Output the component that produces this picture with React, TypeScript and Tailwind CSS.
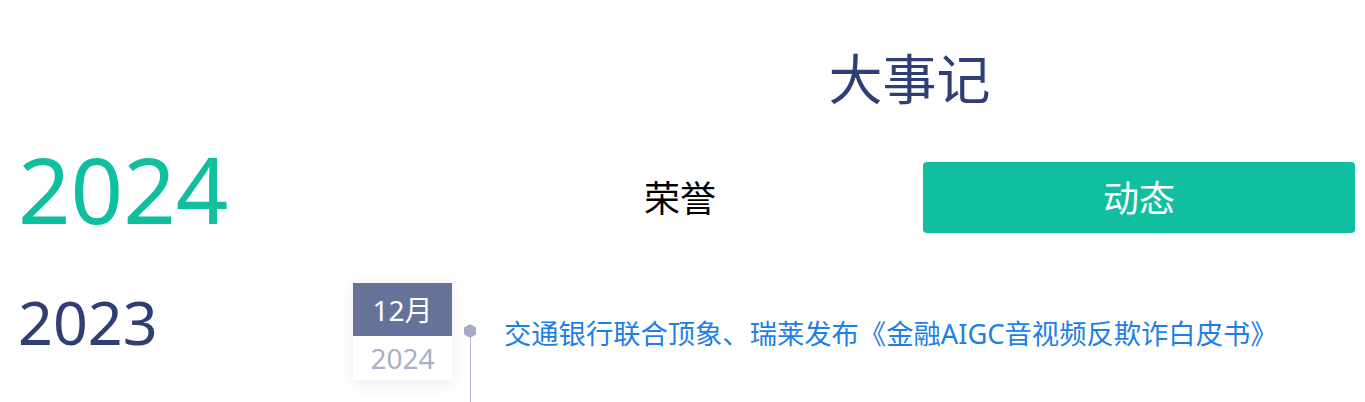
import React from "react";

const years = [
  { label: "2024", active: true },
  { label: "2023", active: false },
];

export default function App() {
  const font = { fontFamily: '"Noto Sans", "Noto Sans CJK SC", sans-serif' };

  return (
    <div className="w-[1365px] h-[402px] overflow-hidden bg-white flex" style={font}>
      {/* Year list */}
      <div className="w-[353px] shrink-0 pl-[18px] pt-[126px] flex flex-col">
        {years.map((y) =>
          y.active ? (
            <div key={y.label} className="text-[92px] leading-[126px] text-[#10bfa0]">
              {y.label}
            </div>
          ) : (
            <div key={y.label} className="text-[61px] leading-[90px] mt-[25px] text-[#313e74]">
              {y.label}
            </div>
          )
        )}
      </div>

      {/* Main */}
      <div className="flex-1 flex flex-col">
        <div className="ml-[111px] mr-[10px]">
          <h1 className="pt-[37px] text-center text-[54px] leading-[84px] text-[#303f73]">大事记</h1>
          <div className="mt-[41px] flex gap-[27px]">
            <button className="flex-1 h-[71px] pt-[3px] rounded text-[36px] text-black bg-white">荣誉</button>
            <button className="flex-1 h-[71px] pt-[3px] rounded text-[36px] text-white bg-[#10bfa0]">动态</button>
          </div>
        </div>

        {/* Timeline */}
        <div className="mt-[50px] flex items-start">
          <div className="w-[99px] shrink-0 bg-white shadow-[0_4px_14px_rgba(60,70,110,0.10)]">
            <div className="h-[53px] bg-[#66729a] text-white text-[28px] flex items-center justify-center">12月</div>
            <div className="h-[44px] text-[#a9afc6] text-[28px] flex items-center justify-center">2024</div>
          </div>
          <div className="w-[34px] shrink-0 flex flex-col items-center pt-[41px] self-stretch ml-[1px]">
            <svg width="12" height="14" viewBox="0 0 12 14" className="block">
              <polygon points="6,0 12,3.5 12,10.5 6,14 0,10.5 0,3.5" fill="#a6abc3" />
            </svg>
            <div className="w-px flex-1 min-h-[70px] bg-[#b4b8cc]" />
          </div>
          <a className="ml-[17px] mt-[33px] text-[27.3px] leading-[36px] text-[#1e7fe6] whitespace-nowrap">
            交通银行联合顶象、瑞莱发布《金融AIGC音视频反欺诈白皮书》
          </a>
        </div>
      </div>
    </div>
  );
}
